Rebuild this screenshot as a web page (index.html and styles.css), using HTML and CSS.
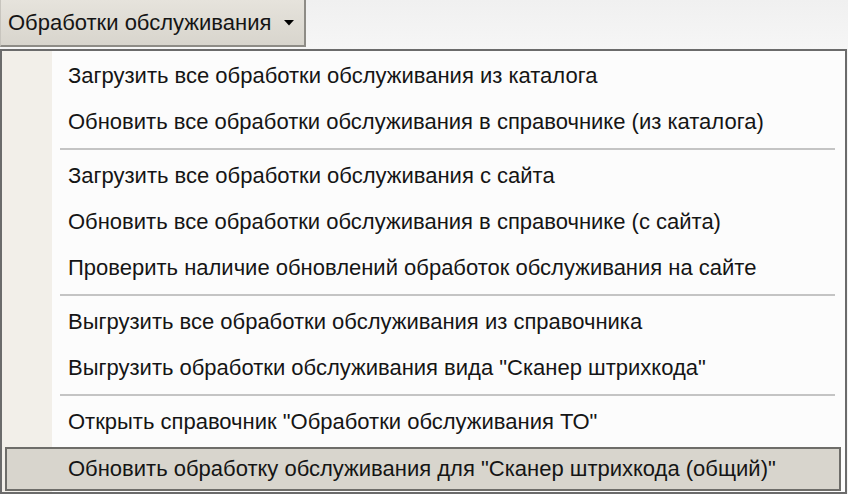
FILE: index.html
```html
<!DOCTYPE html>
<html>
<head>
<meta charset="utf-8">
<link rel="stylesheet" href="styles.css">
</head>
<body>
<div class="page">
  <div class="topbar">
    <div class="button">
      <span class="btn-label">Обработки обслуживания</span>
      <svg class="arrow" width="10" height="6" viewBox="0 0 10 6"><polygon points="0,0 10,0 5,5.5" fill="#000"/></svg>
    </div>
  </div>
  <div class="menu">
    <div class="item">Загрузить все обработки обслуживания из каталога</div>
    <div class="item">Обновить все обработки обслуживания в справочнике (из каталога)</div>
    <div class="sep"></div>
    <div class="item">Загрузить все обработки обслуживания с сайта</div>
    <div class="item">Обновить все обработки обслуживания в справочнике (с сайта)</div>
    <div class="item">Проверить наличие обновлений обработок обслуживания на сайте</div>
    <div class="sep"></div>
    <div class="item">Выгрузить все обработки обслуживания из справочника</div>
    <div class="item">Выгрузить обработки обслуживания вида "Сканер штрихкода"</div>
    <div class="sep"></div>
    <div class="item">Открыть справочник "Обработки обслуживания ТО"</div>
    <div class="item active">Обновить обработку обслуживания для "Сканер штрихкода (общий)"</div>
  </div>
</div>
</body>
</html>
```
FILE: styles.css
```css
html, body {
  margin: 0;
  padding: 0;
  background: #f4f4f4;
}
.page {
  width: 848px;
  height: 494px;
  overflow: hidden;
  font-family: "Liberation Sans", Arial, sans-serif;
  font-size: 22px;
  color: #151515;
}
.topbar {
  height: 49px;
  background: linear-gradient(#f0f0f0, #f6f6f6);
  display: flex;
}
.button {
  width: 306px;
  height: 47px;
  box-sizing: border-box;
  background: linear-gradient(#e6e3dc, #d8d5cd);
  border-right: 2px solid #8e8c86;
  border-bottom: 2px solid #8e8c86;
  border-left: 1px solid #c8c5be;
  display: flex;
  align-items: center;
  padding-left: 7px;
}
.btn-label {
  flex: 1;
}
.arrow {
  margin-right: 10px;
}
.menu {
  width: 847px;
  height: 445px;
  box-sizing: border-box;
  border: 2px solid #6b6b6b;
  background: linear-gradient(to right, #f2efe9 0, #f2efe9 50px, #fcfcfc 50px);
  padding: 2px 4px 1px 3px;
  display: flex;
  flex-direction: column;
}
.item {
  flex: none;
  height: 46px;
  line-height: 46px;
  padding-left: 63px;
  white-space: nowrap;
  box-sizing: border-box;
}
.sep {
  flex: none;
  height: 2px;
  margin: 3px 6px 3px 55px;
  background: #c4c4c4;
}
.active {
  margin-top: 2px;
  background: #d8d5cd;
  border: 2px solid #6e6d69;
  line-height: 40px;
  height: 44px;
  padding-left: 61px;
}
```
